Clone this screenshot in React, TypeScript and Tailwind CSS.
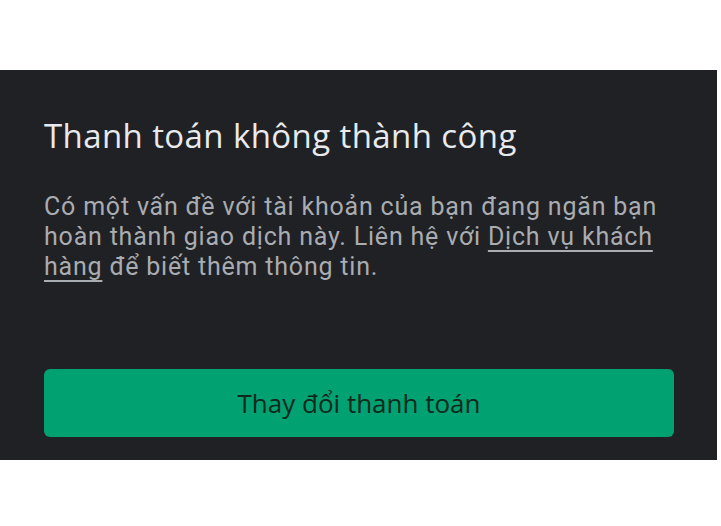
export default function App() {
  return (
    <div className="w-[721px] h-[526px] bg-white pt-[70px]" style={{ fontFamily: "Roboto, 'Noto Sans', sans-serif" }}>
      <div className="w-[717px] bg-[#202124] pl-[44px] pr-[43px] pt-[46px] pb-[23px]">
        <h1 className="text-[33px] leading-[40px] text-[#e8eaed] font-['Open_Sans',Roboto,sans-serif] tracking-[0.4px] whitespace-nowrap">
          Thanh toán không thành công
        </h1>
        <p className="mt-[36px] text-[25px] leading-[30px] tracking-[0.8px] text-[#a9acb1] pr-[10px]">
          Có một vấn đề với tài khoản của bạn đang ngăn bạn hoàn thành giao dịch này. Liên hệ với{" "}
          <span className="underline underline-offset-[5px] decoration-[1.5px]">Dịch vụ khách hàng</span> để biết thêm thông tin.
        </p>
        <button className="mt-[87px] w-[630px] h-[68px] rounded-[6px] bg-[#01a172] text-[#10291d] text-[26px] font-['Open_Sans',Roboto,sans-serif] flex items-center justify-center">
          Thay đổi thanh toán
        </button>
      </div>
    </div>
  );
}
